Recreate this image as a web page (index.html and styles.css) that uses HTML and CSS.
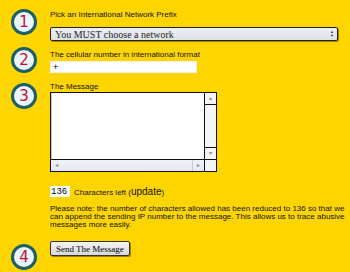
FILE: index.html
```html
<!DOCTYPE html>
<html lang="en">
<head>
    <meta charset="UTF-8">
    <title>Send SMS</title>
    <link rel="stylesheet" href="styles.css">
</head>
<body>
    <form class="sms-form">
        <div class="step step-1">
            <div class="badge"><span>1</span></div>
            <div class="field">
                <label>Pick an International Network Prefix</label>
                <div class="select">
                    <span class="select-text">You MUST choose a network</span>
                    <span class="select-arrow">&#9650;<br>&#9660;</span>
                </div>
            </div>
        </div>
        <div class="step step-2">
            <div class="badge"><span>2</span></div>
            <div class="field">
                <label>The cellular number in international format</label>
                <input class="number" type="text" value="+">
            </div>
        </div>
        <div class="step step-3">
            <div class="badge"><span>3</span></div>
            <div class="field">
                <label>The Message</label>
                <div class="message-box">
                    <textarea class="message"></textarea>
                    <div class="vbar">
                        <span class="sb-btn">&#9652;</span>
                        <span class="sb-track"></span>
                        <span class="sb-btn">&#9662;</span>
                    </div>
                    <div class="hbar">
                        <span class="sb-btn">&#9666;</span>
                        <span class="sb-track"></span>
                        <span class="sb-btn">&#9656;</span>
                    </div>
                    <div class="corner"></div>
                </div>
                <div class="counter">
                    <input class="count" type="text" value="136">
                    <span>Characters left (<span class="update">update</span>)</span>
                </div>
                <p class="note">Please note: the number of characters allowed has been reduced to 136 so that we can append the sending IP number to the message. This allows us to trace abusive messages more easily.</p>
            </div>
        </div>
        <div class="step step-4">
            <div class="badge"><span>4</span></div>
            <div class="field">
                <button type="button" class="send">Send The Message</button>
            </div>
        </div>
    </form>
</body>
</html>
```

FILE: styles.css
```css
body {
    margin: 0;
    background-color: #ffd500;
    font-family: "Liberation Sans", Arial, sans-serif;
    font-size: 8px;
    color: #111;
}
.sms-form {
    padding: 9px 0 0 11px;
}
.step {
    display: flex;
    gap: 13px;
}
.badge {
    width: 20px;
    height: 20px;
    border: 3px solid #1d5f66;
    border-radius: 50%;
    background-color: #eaf6fb;
    display: flex;
    align-items: center;
    justify-content: center;
    flex-shrink: 0;
}
.badge span {
    color: #c8102e;
    font-family: "DejaVu Sans", sans-serif;
    font-size: 15px;
    line-height: 1;
}
.field {
    flex: 1;
    padding-right: 12px;
}
.field label {
    display: block;
    line-height: 10px;
}
.step-1 .field label {
    margin-top: 1px;
}
.select {
    margin-top: 7px;
    height: 12px;
    border: 1px solid #222;
    border-radius: 2px;
    background: linear-gradient(#eef0f7, #dde2e6);
    display: flex;
    align-items: center;
    box-shadow: 1px 1px 0 #a08400;
}
.select-text {
    flex: 1;
    padding-left: 4px;
    font-family: "Liberation Serif", serif;
    font-size: 10px;
    color: #222;
}
.select-arrow {
    width: 10px;
    font-size: 4px;
    line-height: 4px;
    text-align: center;
    color: #333;
}
.step-2 {
    margin-top: 6px;
}
.step-2 .field label {
    margin-top: 3px;
}
.number {
    display: block;
    margin-top: 1px;
    width: 147px;
    height: 12px;
    box-sizing: border-box;
    border: 1px solid #eee;
    padding: 0 2px;
    font-family: "Liberation Sans", Arial, sans-serif;
    font-size: 9px;
    background: #fff;
}
.step-3 {
    margin-top: 10px;
}
.step-3 .field label {
    margin-top: -1px;
}
.message-box {
    width: 167px;
    height: 80px;
    border: 1px solid #111;
    display: grid;
    grid-template-columns: 1fr 12px;
    grid-template-rows: 1fr 12px;
    background: #fff;
    box-sizing: border-box;
}
.message {
    border: none;
    border-left: 1px solid #ccc;
    resize: none;
    outline: none;
    margin: 0;
    padding: 2px;
}
.vbar, .hbar {
    display: flex;
    background: #f4f4fb;
}
.vbar {
    flex-direction: column;
    border-left: 1px solid #111;
}
.hbar {
    border-top: 1px solid #111;
    background: linear-gradient(#f0f2f8, #e4e8f2);
}
.sb-btn {
    width: 11px;
    height: 11px;
    font-size: 6px;
    line-height: 11px;
    text-align: center;
    color: #888;
}
.vbar .sb-btn:first-child {
    border-bottom: 1px solid #111;
}
.vbar .sb-btn:last-child {
    border-top: 1px solid #111;
}
.hbar .sb-btn:last-child {
    border-left: 1px solid #ccc;
}
.sb-track {
    flex: 1;
}
.corner {
    border-left: 1px solid #111;
    border-top: 1px solid #111;
    background: #f4f4fb;
}
.counter {
    margin-top: 14px;
    display: flex;
    align-items: center;
    gap: 4px;
}
.count {
    width: 20px;
    height: 11px;
    box-sizing: border-box;
    border: none;
    padding: 0 1px;
    font-family: "Liberation Mono", monospace;
    font-size: 9px;
    background: #fff;
}
.update {
    font-size: 10px;
}
.note {
    margin: 8px 0 0;
    line-height: 8px;
    width: 300px;
}
.step-4 {
    margin-top: 11px;
}
.step-4 .badge {
    margin-top: 4px;
}
.send {
    margin-top: 1px;
    height: 15px;
    padding: 0 5px;
    font-family: "Liberation Serif", serif;
    font-size: 9px;
    background: linear-gradient(#f4f4f4, #d8d8d8);
    border: 1px solid #333;
    border-radius: 2px;
    box-shadow: 1px 1px 0 #a08400;
}
```
